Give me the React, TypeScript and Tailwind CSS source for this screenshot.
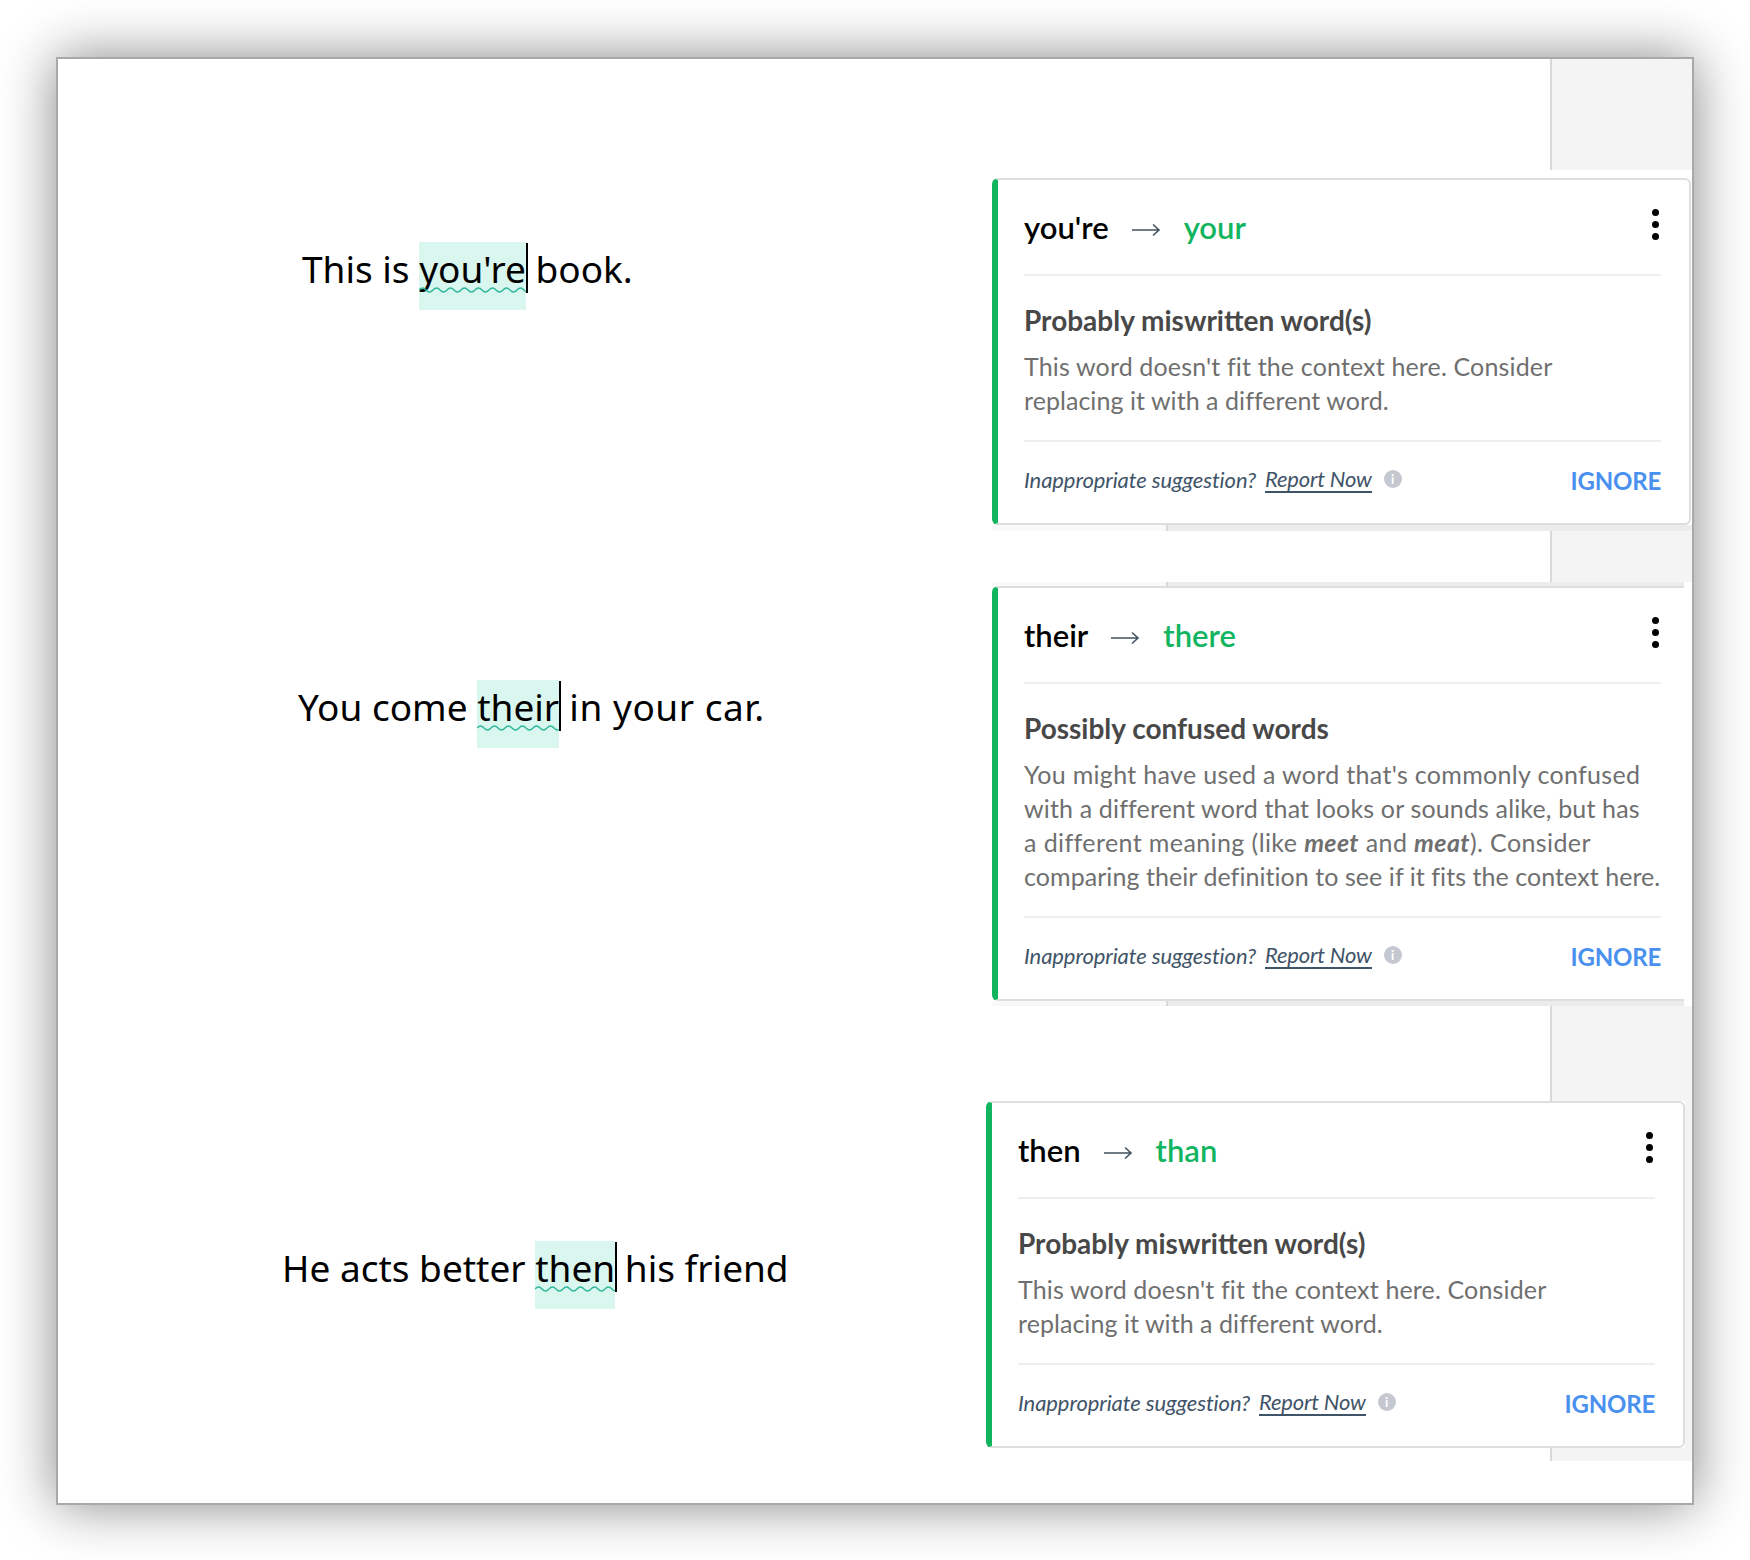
import type { ReactNode } from 'react';

const wavePath = (width: number) => {
  let d = 'M0 3';
  for (let x = 0; x < width; x += 14) {
    d += ` q3.5 -4 7 0 t7 0`;
  }
  return d;
};

function Flagged({ word, width }: { word: string; width: number }) {
  return (
    <span className="relative inline-block bg-[#d9f7ee] pb-[14px] leading-[54px]">
      {word}
      <svg className="absolute left-0 top-[45px]" width={width} height="6" viewBox={`0 0 ${width} 6`}>
        <path d={wavePath(width)} fill="none" stroke="#2fb79a" strokeWidth="1.3" />
      </svg>
      <span className="absolute right-[-2px] top-[1px] h-[50px] w-[2px] bg-black" />
    </span>
  );
}

function Sentence({ before, word, after, width, className }: { before: string; word: string; after: ReactNode; width: number; className: string }) {
  return (
    <div className={`whitespace-pre font-['Noto_Sans',sans-serif] text-[37px] leading-[54px] text-black ${className}`}>
      {before}
      <Flagged word={word} width={width} />
      {after}
    </div>
  );
}

function Dots() {
  return (
    <div className="mr-[2px] flex flex-col gap-[5px] pb-[6px]">
      <span className="h-[7px] w-[7px] rounded-full bg-black" />
      <span className="h-[7px] w-[7px] rounded-full bg-black" />
      <span className="h-[7px] w-[7px] rounded-full bg-black" />
    </div>
  );
}

function Arrow() {
  return (
    <svg width="30" height="14" viewBox="0 0 30 14" className="mt-[6px]">
      <path d="M1 7h27M22 1.5 28 7l-6 5.5" fill="none" stroke="#44525f" strokeWidth="1.6" />
    </svg>
  );
}

function Card({ from, to, title, children, className }: { from: string; to: string; title: string; children: ReactNode; className: string }) {
  return (
    <div className={`shrink-0 rounded-l-[6px] border-l-[6px] border-l-[#12b55f] bg-white font-['Lato',sans-serif] ${className}`}>
      <div className="flex h-[94px] items-center justify-between">
        <div className="flex items-center text-[31px] font-semibold">
          <span className="text-black">{from}</span>
          <span className="ml-[22px] mr-[23px] flex"><Arrow /></span>
          <span className="text-[#12b55f]">{to}</span>
        </div>
        <Dots />
      </div>
      <div className="h-[2px] bg-[#eeeeee]" />
      <div className="pb-[23px] pt-[27px]">
        <h3 className="text-[28px] font-bold leading-[34px] text-[#484848]">{title}</h3>
        <p className="mt-[12px] whitespace-nowrap text-[25px] leading-[34px] tracking-[0.15px] text-[#6f6f6f]">{children}</p>
      </div>
      <div className="h-[2px] bg-[#eeeeee]" />
      <div className="flex h-[81px] items-center justify-between pb-[5px]">
        <div className="flex items-center pb-[2px] text-[22px] italic text-[#3f5468]">
          <span className="tracking-[-0.1px]">Inappropriate suggestion?</span>
          <a className="ml-[9px] border-b-2 border-[#3f5468] leading-[25px] tracking-[-0.2px]">Report Now</a>
          <span className="ml-[12px] flex h-[18px] w-[18px] items-center justify-center rounded-full bg-[#c5c8d1] text-[13px] font-bold not-italic leading-none text-white">i</span>
        </div>
        <span className="mt-[2px] text-[24px] font-bold tracking-[-0.2px] text-[#4a90ee]">IGNORE</span>
      </div>
    </div>
  );
}

function Rail({ height }: { height: string }) {
  return (
    <div className={`flex justify-end ${height}`}>
      <div className="w-[142px] border-l-2 border-[#d9d9d9] bg-[#f4f4f4]" />
    </div>
  );
}

function Band({ height, right }: { height: string; right: string }) {
  return (
    <div className={`ml-[934px] flex ${height} ${right}`}>
      <div className="w-[174px] bg-[#f9f9f9]" />
      <div className="w-[2px] bg-[#d9d9d9]" />
      <div className="flex-1 bg-[#ececec]" />
    </div>
  );
}

const PROBABLY = 'Probably miswritten word(s)';
const DOESNT_FIT = (
  <>
    This word doesn't fit the context here. Consider
    <br />
    <span className="tracking-[0.05px]">replacing it with a different word.</span>
  </>
);

export default function App() {
  return (
    <div className="h-[1560px] w-[1750px] bg-white pl-[56px] pt-[57px]">
      <div className="flex h-[1448px] w-[1638px] flex-col border-2 border-[#a9a9a9] bg-white shadow-[0_0_52px_rgba(0,0,0,0.48)]">
        <Rail height="h-[111px]" />

        {/* you're -> your */}
        <div className="flex pt-[8px]">
          <div className="w-[934px] shrink-0">
            <Sentence before="This is " word="you're" after=" book." width={107} className="pl-[244px] pt-[64px]" />
          </div>
          <Card from="you're" to="your" title={PROBABLY} className="w-[699px] rounded-r-[6px] border-y-2 border-r-2 border-y-[#dedede] border-r-[#dedede] pl-[26px] pr-[28px]">
            {DOESNT_FIT}
          </Card>
        </div>
        <Band height="h-[6px]" right="" />
        <Rail height="h-[51px]" />

        {/* their -> there */}
        <Band height="h-[4px]" right="mr-[8px]" />
        <div className="flex">
          <div className="w-[934px] shrink-0">
            <Sentence before="You come " word="their" after={<span className="tracking-[0.55px]"> in your car.</span>} width={82} className="pl-[240px] pt-[94px]" />
          </div>
          <Card from="their" to="there" title="Possibly confused words" className="w-[692px] border-y-2 border-y-[#dedede] pl-[26px] pr-[23px]">
            <span className="tracking-[0.32px]">You might have used a word that's commonly confused</span>
            <br />
            with a different word that looks or sounds alike, but has
            <br />
            <span className="tracking-[0.4px]">a different meaning (like <b className="italic">meet</b> and <b className="italic">meat</b>). Consider</span>
            <br />
            <span className="tracking-[0.06px]">comparing their definition to see if it fits the context here.</span>
          </Card>
        </div>
        <Band height="h-[5px]" right="mr-[8px]" />
        <Rail height="h-[95px]" />

        {/* then -> than */}
        <div className="flex">
          <div className="w-[928px] shrink-0">
            <Sentence before="He acts better " word="then" after=" his friend" width={80} className="pl-[224px] pt-[140px]" />
          </div>
          <Card from="then" to="than" title={PROBABLY} className="w-[699px] rounded-r-[6px] border-y-2 border-r-2 border-y-[#dedede] border-r-[#dedede] pl-[26px] pr-[28px]">
            {DOESNT_FIT}
          </Card>
          <div className="flex-1 bg-[#f4f4f4]" />
        </div>
        <Rail height="h-[13px]" />
      </div>
    </div>
  );
}
